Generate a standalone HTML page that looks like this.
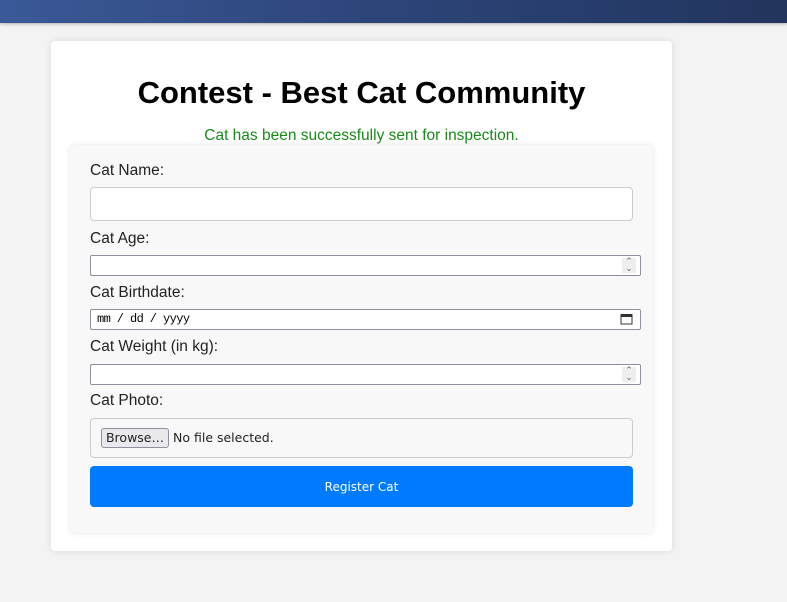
<!DOCTYPE html>
<html><head><style>
*{box-sizing:border-box}
body{margin:0;width:787px;height:602px;background:#f3f3f3;font-family:"Liberation Sans",Arial,sans-serif;position:relative;overflow:hidden}
.top{position:absolute;left:0;top:0;width:787px;height:23px;background:linear-gradient(90deg,#3b5998,#2c4478 50%,#22355e);box-shadow:0 1px 3px rgba(0,0,0,.3)}
.card{position:absolute;left:51px;top:41px;width:621px;height:510px;background:#fff;border-radius:4px;box-shadow:0 0 8px rgba(0,0,0,.1)}
h1{position:absolute;left:51px;top:75px;width:621px;margin:0;text-align:center;font-size:31px;font-weight:bold;color:#000}
.ok{position:absolute;left:51px;top:127px;width:621px;text-align:center;color:#1a8a1a;font-size:15.5px}
.form{position:absolute;left:70px;top:145px;width:583px;height:388px;background:#f8f8f8;border-radius:4px;box-shadow:0 0 6px rgba(0,0,0,.1)}
.l{position:absolute;left:90px;font-size:15.5px;color:#222}
.in{position:absolute;left:90px;width:551px;height:21px;background:#fff;border:1px solid #8f8f9d;border-radius:2px}
.sp{position:absolute;right:4px;top:2px;width:14px;height:15px;background:#eee;font-size:9px;color:#666;line-height:7px;text-align:center}
</style></head><body>
<div class="top"></div>
<div class="card"></div>
<h1>Contest - Best Cat Community</h1>
<div class="ok">Cat has been successfully sent for inspection.</div>
<div class="form"></div>
<div class="l" style="top:162px">Cat Name:</div>
<div class="in" style="top:187px;width:543px;height:34px;border:1px solid #ccc;border-radius:4px"></div>
<div class="l" style="top:230px">Cat Age:</div>
<div class="in" style="top:255px"><div class="sp">⌃<br>⌄</div></div>
<div class="l" style="top:284px">Cat Birthdate:</div>
<div class="in" style="top:309px;font-family:'Liberation Mono',monospace;font-size:12px;letter-spacing:-0.6px;padding:2px 6px">mm / dd / yyyy
<svg style="position:absolute;right:7px;top:3px" width="13" height="12" viewBox="0 0 13 12"><rect x="1" y="1.5" width="11" height="9.5" fill="none" stroke="#333"/><rect x="1" y="1.5" width="11" height="2.5" fill="#333"/></svg></div>
<div class="l" style="top:338px">Cat Weight (in kg):</div>
<div class="in" style="top:364px"><div class="sp">⌃<br>⌄</div></div>
<div class="l" style="top:392px">Cat Photo:</div>
<div class="in" style="top:418px;width:543px;height:40px;border:1px solid #ccc;border-radius:4px;background:#f8f8f8"></div>
<div style="position:absolute;left:101px;top:428px;width:68px;height:20px;border:1px solid #8f8f9d;border-radius:3px;background:#e9e9ed;font-family:'DejaVu Sans',sans-serif;font-size:12.5px;line-height:18px;text-align:center;color:#222">Browse…</div>
<div style="position:absolute;left:173px;top:430px;font-family:'DejaVu Sans',sans-serif;font-size:12.5px;color:#222">No file selected.</div>
<div style="position:absolute;left:90px;top:466px;width:543px;height:41px;background:#007bff;border-radius:4px;color:#fff;font-family:'DejaVu Sans',sans-serif;font-size:12px;text-align:center;line-height:43px">Register Cat</div>
</body></html>
